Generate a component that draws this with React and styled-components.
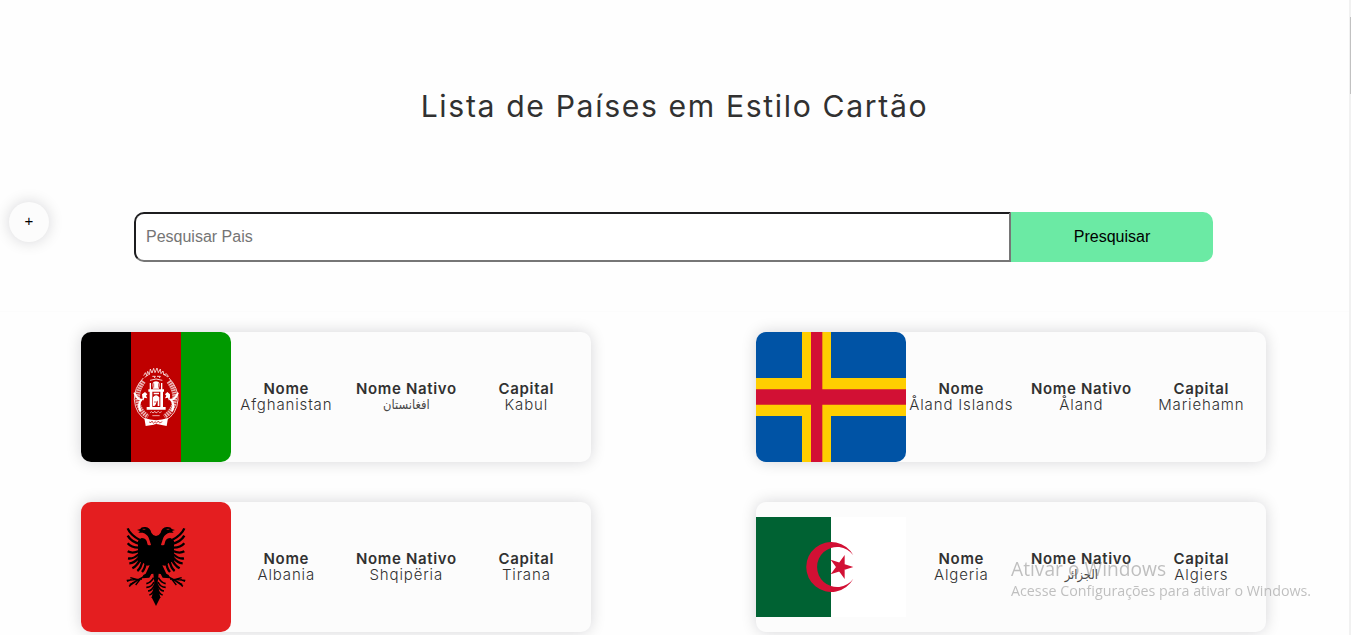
import React from 'react';
import styled, { createGlobalStyle } from 'styled-components';

const GlobalStyle = createGlobalStyle`
  * { box-sizing: border-box; margin: 0; padding: 0; }
  html, body { height: 100%; overflow: hidden; background: #fefefe; }
  body { color: #313131; font-family: Inter, 'Liberation Sans', sans-serif; }
`;

const Page = styled.div`
  display: flex;
  height: 635px;
  overflow: hidden;
`;
const Content = styled.main`
  flex: 1;
  display: flex;
  flex-direction: column;
`;
const ScrollTrack = styled.div`
  width: 2px;
  background: #f1f1f1;
  padding: 17px 0 0 1px;
`;
const ScrollThumb = styled.div`
  height: 77px;
  background: #c1c1c1;
`;
const Header = styled.header`
  height: 312px;
  flex: none;
  border-bottom: 1px solid #fcfcfc;
`;
const Title = styled.h1`
  padding-top: 86px;
  height: 202px;
  text-align: center;
  font-size: 30.2px;
  line-height: 40px;
  font-weight: 380;
  letter-spacing: 1.63px;
`;
const SearchRow = styled.div`
  display: flex;
  align-items: flex-start;
  padding-left: 9px;
`;
const RoundButton = styled.button`
  width: 40px;
  height: 40px;
  padding-bottom: 2px;
  border: 0;
  border-radius: 50%;
  background: #fcfcfc;
  box-shadow: 0 0 15px rgba(0, 0, 25, 0.16);
  font: 15px/38px 'Liberation Sans', Arial, sans-serif;
  color: #000;
`;
const SearchForm = styled.form`
  display: flex;
  margin: 10px 0 0 85px;
  height: 50px;
`;
const SearchInput = styled.input`
  width: 877px;
  padding: 0 10px;
  border: 2px solid;
  border-color: #1d1d1f #767676 #767676 #1d1d1f;
  border-radius: 10px 0 0 10px;
  background: #fff;
  font: 16px 'Liberation Sans', Arial, sans-serif;
  outline: 0;
  &::placeholder { color: #757575; }
`;
const SearchButton = styled.button`
  width: 202px;
  border: 0;
  border-radius: 0 10px 10px 0;
  background: #6beaa4;
  color: #000;
  font: 16px 'Liberation Sans', Arial, sans-serif;
`;
const CardGrid = styled.section`
  display: grid;
  grid-template-columns: 510px 510px;
  gap: 40px 165px;
  padding: 20px 0 0 81px;
`;
const Card = styled.article`
  display: flex;
  align-items: center;
  height: 130px;
  border-radius: 10px;
  background: #fcfcfc;
  box-shadow: 0 0 15px rgba(0, 0, 25, 0.16);
`;
const Flag = styled.svg`
  display: block;
  width: 150px;
  height: ${(p) => p.$height || 130}px;
  border-radius: ${(p) => (p.$height ? 0 : 10)}px;
  flex: none;
`;
const Fields = styled.dl`
  display: flex;
  width: 360px;
  margin-left: -4.7px;
`;
const Field = styled.div`
  display: flex;
  flex-direction: column;
  align-items: center;
  width: 120px;
  white-space: nowrap;
  line-height: 16px;
  font-size: 15px;
`;
const Label = styled.dt`
  font-weight: 600;
  letter-spacing: 0.65px;
`;
const Value = styled.dd`
  font-weight: 300;
  letter-spacing: 0.85px;
`;
const ArabicValue = styled(Value)`
  font-family: 'DejaVu Sans Condensed', 'DejaVu Sans', sans-serif;
  font-stretch: condensed;
  font-size: 12.8px;
  color: #484848;
  letter-spacing: 0;
`;
const Watermark = styled.aside`
  position: fixed;
  left: 1011px;
  top: 555px;
  color: rgba(112, 112, 112, 0.43);
  font-family: 'Open Sans', 'Noto Sans', sans-serif;
  white-space: nowrap;
  pointer-events: none;
`;
const WatermarkTitle = styled.p`
  font-size: 19.2px;
  line-height: 27px;
`;
const WatermarkText = styled.p`
  font-size: 14.27px;
  line-height: 18px;
`;

const Afghanistan = () => (
  <Flag viewBox="33 36 450 390" preserveAspectRatio="none">
    <path fill="#000" d="M33 36h150v390H33z" />
    <path fill="#bf0000" d="M183 36h150v390H183z" />
    <path fill="#009a00" d="M333 36h150v390H333z" />
    <g fill="none" stroke="#fff">
      <path d="M220 174Q192 203 193 239Q196 283 232 302M297 174Q325 203 324 239Q321 283 285 302" strokeWidth="3" opacity=".8" />
      <path d="M221 184Q201 211 203 240Q207 273 234 290M296 184Q316 211 314 240Q310 273 283 290" strokeWidth="14" strokeDasharray="5 2" opacity=".7" />
      <path d="M193 218Q202 240 215 239Q202 252 211 273M324 218Q315 240 302 239Q315 252 306 273" strokeWidth="6" />
      <path d="M221 167l5-9 4 9 3-13 5 10 3-17 5 12 5-14 4 13 6-14 4 14 6-11 2 14 6-8 3 12 7-4 7 9M224 172l12-8M280 162l14 9" strokeWidth="3" opacity=".75" />
      <path d="M247 169h9l-3 5M261 169h10l-3 5M240 181q18-8 37 0" strokeWidth="2.5" />
    </g>
    <g fill="#fff">
      <path d="M249 206Q243 184 258 184Q274 184 267 206zM235 208h47v7h-47zM239 215h8v47h-8zM271 215h8v47h-8zM230 261h57v8h-57zM239 189h4v20h-4zM273 189h4v20h-4zM251 218h16v5h-16z" />
      <path d="M249 258v-26q9-12 19 0v26h-5v-17l-8 16z" />
      <path d="M216 223l9-7 7 7-4 4 4 8-9-2-3 9-3-10zM300 223l-8-7-7 7 4 4-4 8 9-2 3 9 3-10z" />
      <path d="M223 294Q258 307 294 294L290 318L264 313Q257 311 251 314L227 318z" />
    </g>
    <path d="M237 306l6 2 3-5 4 7 6-5 3 5 6-7 4 6 8-4M251 190v13M266 190v13M252 246h11" fill="none" stroke="#bf0000" strokeWidth="2" />
    <path d="M240 278l5-3 4 4 6-5 3 5 7-5 4 4 6-3M247 287h22" fill="none" stroke="#fff" strokeWidth="2" />
  </Flag>
);

const Aland = () => (
  <Flag viewBox="33 36 450 390" preserveAspectRatio="none">
    <path fill="#0053a5" d="M33 36h450v390H33z" />
    <path fill="#ffce00" d="M171 36h87v390h-87zM33 174h450v114H33z" />
    <path fill="#d21034" d="M198 36h34v390h-34zM33 208h450v46H33z" />
  </Flag>
);

const EagleHalf = () => (
  <g>
    <path fill="#000" d="M258 138Q248 136 244 128Q241 113 226 111Q213 110 211 117L201 120L210 123L205 128L218 128Q231 132 236 143L243 164Q240 167 233 164L230 153Q226 144 215 144Q207 146 204 154V213L221 220L231 227L239 226L227 251L220 255L216 265L238 263L244 252L250 251L253 277L246 324L258 348z" />
    <g fill="none" stroke="#000" strokeWidth="7">
      <path d="M211 151Q181 135 173 115M210 162Q184 156 173 137M208 173Q185 174 173 160M207 183Q187 192 173 184M207 192Q190 208 174 205M208 201Q194 219 178 220M211 207Q203 226 187 235M218 211Q213 235 202 243M228 214Q226 235 216 246" />
    </g>
    <g fill="none" stroke="#000" strokeWidth="5">
      <path d="M251 263Q243 278 229 281M252 276Q245 292 229 292M253 286Q246 302 234 303M253 297Q248 313 238 315M254 307L246 324" />
      <path d="M224 258L179 284M216 267L170 271M209 266L177 289M211 267L197 285M206 270L181 263M188 278L178 290M184 269L171 274" strokeWidth="4" />
    </g>
    <path d="M218 118h8" stroke="#e41e20" strokeWidth="2" />
  </g>
);

const Albania = () => (
  <Flag viewBox="33 36 450 390" preserveAspectRatio="none">
    <path fill="#e41e20" d="M33 36h450v390H33z" />
    <EagleHalf />
    <g transform="translate(516 0) scale(-1 1)"><EagleHalf /></g>
  </Flag>
);

const Algeria = () => (
  <Flag $height={100} viewBox="33 81 450 300">
    <path fill="#fff" d="M33 81h450v300H33z" />
    <path fill="#006233" d="M33 81h225v300H33z" />
    <path fill="#d21034" d="M325 196A75 75 0 1 0 325 266A60 60 0 1 1 325 196z" />
    <path fill="#d21034" d="M325 231L257 253L299 195V267L257 209z" />
  </Flag>
);

const countries = [
  { name: 'Afghanistan', native: 'افغانستان', capital: 'Kabul', FlagArt: Afghanistan, arabic: true },
  { name: 'Åland Islands', native: 'Åland', capital: 'Mariehamn', FlagArt: Aland },
  { name: 'Albania', native: 'Shqipëria', capital: 'Tirana', FlagArt: Albania },
  { name: 'Algeria', native: 'الجزائر', capital: 'Algiers', FlagArt: Algeria, arabic: true },
];

function CountryCard({ name, native, capital, arabic, FlagArt }) {
  const Native = arabic ? ArabicValue : Value;
  return (
    <Card>
      <FlagArt />
      <Fields>
        <Field><Label>Nome</Label><Value>{name}</Value></Field>
        <Field><Label>Nome Nativo</Label><Native>{native}</Native></Field>
        <Field><Label>Capital</Label><Value>{capital}</Value></Field>
      </Fields>
    </Card>
  );
}

export default function App() {
  return (
    <>
      <GlobalStyle />
      <Page>
        <Content>
          <Header>
            <Title>Lista de Países em Estilo Cartão</Title>
            <SearchRow>
              <RoundButton>+</RoundButton>
              <SearchForm>
                <SearchInput placeholder="Pesquisar Pais" />
                <SearchButton type="button">Presquisar</SearchButton>
              </SearchForm>
            </SearchRow>
          </Header>
          <CardGrid>
            {countries.map((c) => <CountryCard key={c.name} {...c} />)}
          </CardGrid>
        </Content>
        <ScrollTrack><ScrollThumb /></ScrollTrack>
      </Page>
      <Watermark>
        <WatermarkTitle>Ativar o Windows</WatermarkTitle>
        <WatermarkText>Acesse Configurações para ativar o Windows.</WatermarkText>
      </Watermark>
    </>
  );
}
